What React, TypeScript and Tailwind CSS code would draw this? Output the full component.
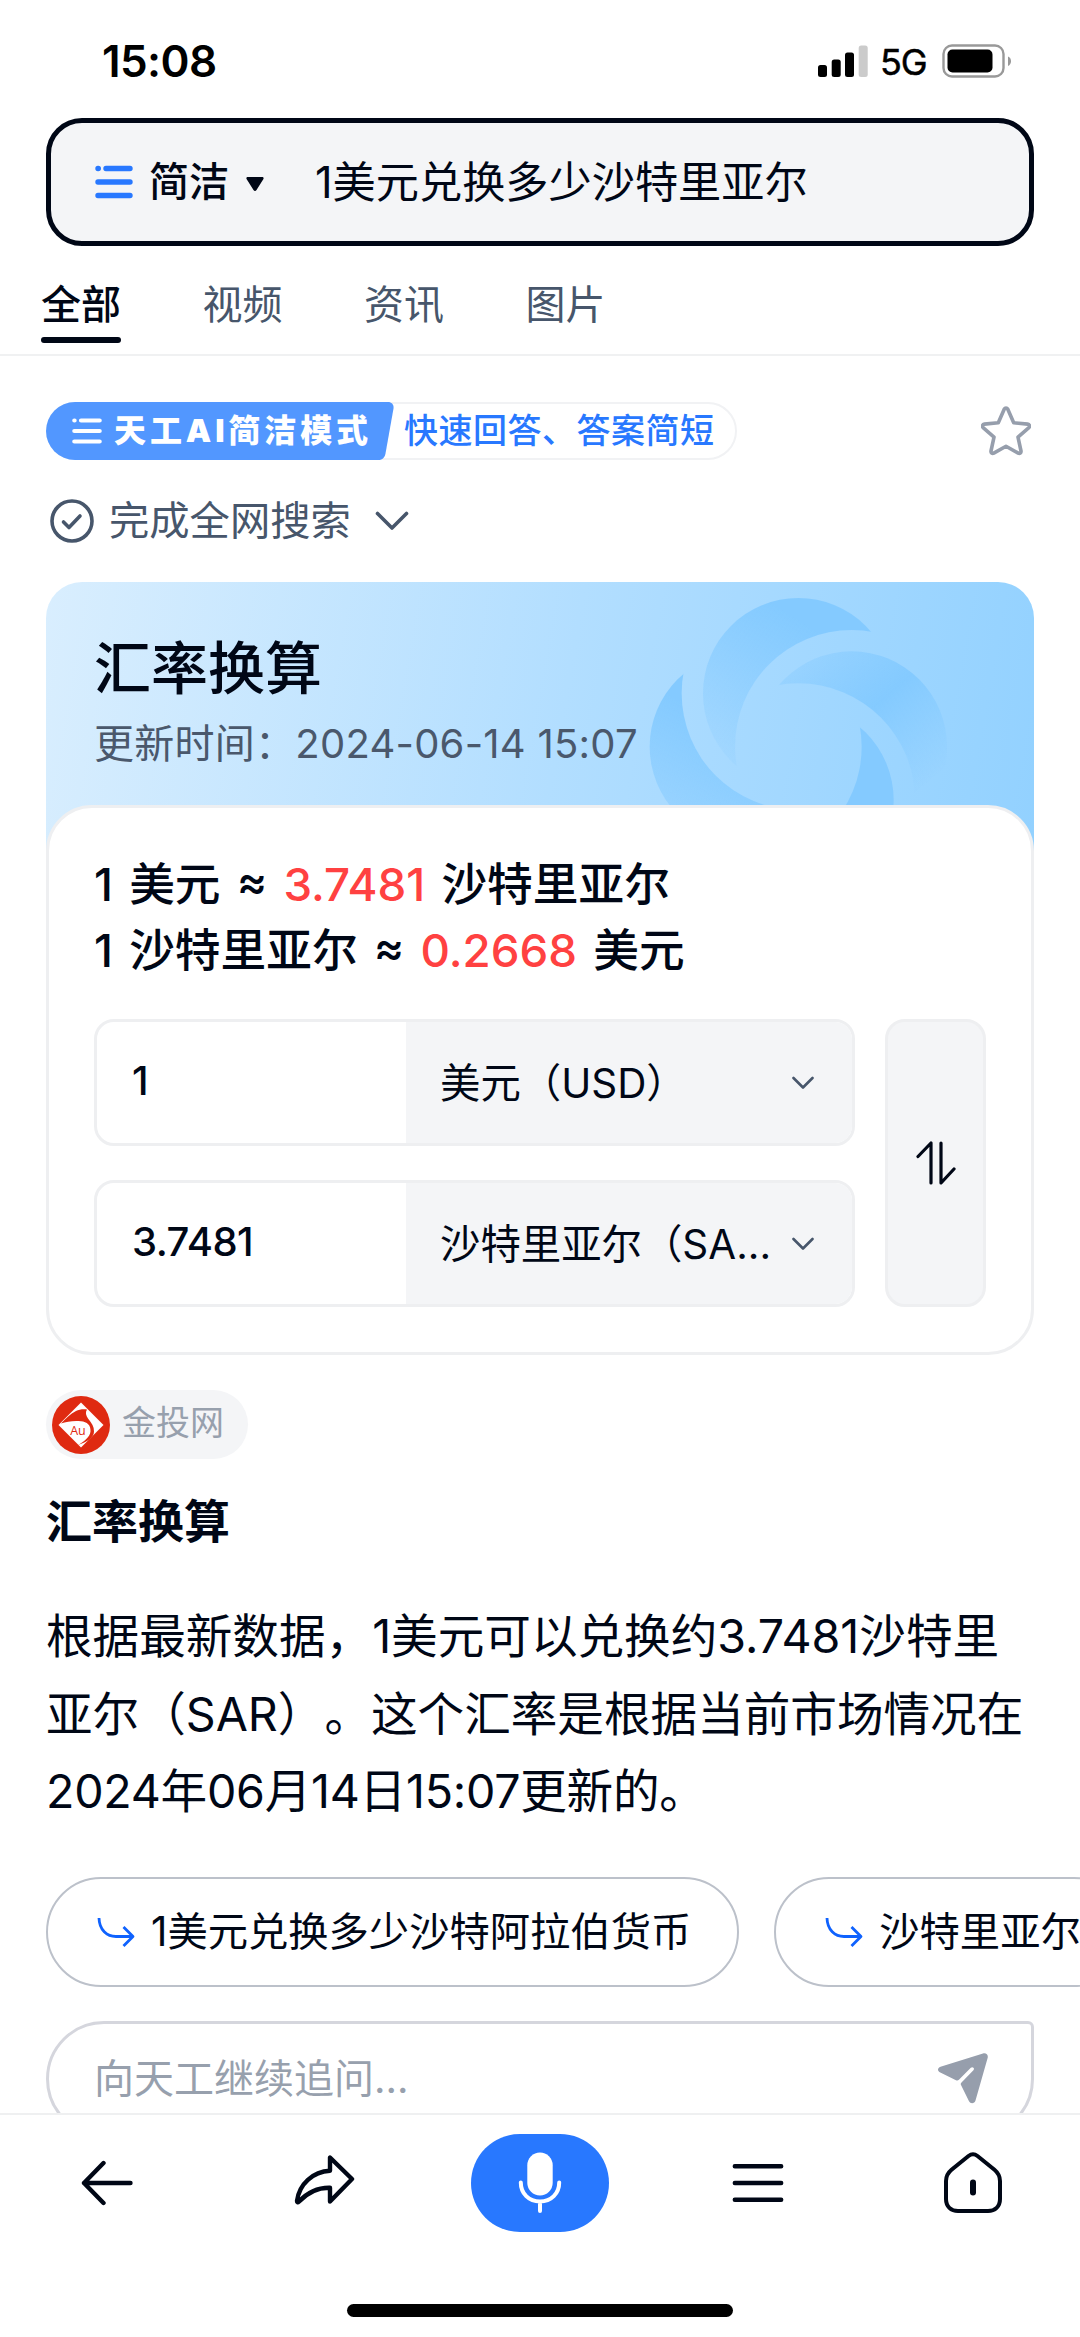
import React, { useState } from 'react';

const tabs = ['全部', '视频', '资讯', '图片'];
const suggestions = ['1美元兑换多少沙特阿拉伯货币', '沙特里亚尔'];

const StatusBar: React.FC = () => (
  <div className="flex h-[118px] items-start justify-between pl-[102px] pr-[68px]">
    <span className="mt-[39px] text-[44px] font-semibold leading-[44px] tracking-[-0.6px] text-black">15:08</span>
    <div className="mt-[43px] flex h-9 items-center">
      <svg width="50" height="34" viewBox="0 0 50 34">
        <rect x="0" y="21" width="9" height="12" rx="2.5" />
        <rect x="13.7" y="15.5" width="9" height="17.5" rx="2.5" />
        <rect x="27" y="8.5" width="9" height="24.5" rx="2.5" />
        <rect x="40.7" y="1.5" width="9" height="31.5" rx="2.5" fill="#cbcbcb" />
      </svg>
      <span className="ml-3 mt-0.5 w-[50px] text-[36px] leading-9 tracking-[-1.2px] text-black [-webkit-text-stroke:0.5px_black]">5G</span>
      <svg className="ml-[12px]" width="70" height="34" viewBox="0 0 70 34">
        <rect x="1.5" y="1.5" width="60" height="31" rx="8.5" fill="none" stroke="#999" strokeWidth="2.4" />
        <rect x="5.5" y="5.5" width="45" height="23" rx="5" />
        <path d="M66 12.5c2 .8 3 2.6 3 4.7s-1 3.900-3 4.700z" fill="#999" />
      </svg>
    </div>
  </div>
);

const SearchBox: React.FC = () => (
  <div className="mx-[46px] flex h-32 items-center rounded-[36px] border-[5px] border-[#000716] bg-[#f4f5f7] pl-[44px] text-[#000716]">
    <svg width="38" height="34" viewBox="0 0 38 34" stroke="#2878ff" strokeWidth="5.4" strokeLinecap="round">
      <path d="M3 3.500h.3M11 3.500h24M3 17h32M3 30.500h32" />
    </svg>
    <span className="ml-[16px] text-[40px] font-medium leading-[40px]">简洁</span>
    <svg className="ml-[17px] mt-1" width="18" height="16" viewBox="0 0 18 16">
      <path d="M2 1h14c1.500 0 2 1 1.300 2.200L10.500 14c-.8 1.300-2.200 1.300-3 0L.7 3.200C0 2 .5 1 2 1z" fill="#000716" />
    </svg>
    <span className="ml-[51px] text-[43.2px] leading-[44px]">1美元兑换多少沙特里亚尔</span>
  </div>
);

const ModeBadge: React.FC = () => (
  <div className="flex items-center justify-between pr-[3px]">
    <div className="relative flex h-[58px] w-[691px] items-center rounded-full border-2 border-[#f1f2f4]">
      <svg className="absolute -left-0.5 -top-0.5" width="348" height="58" viewBox="0 0 348 58">
        <path d="M29 0h313c4 0 6 3 5.500 6.500l-8 45c-.8 4-3 6.500-7 6.500H29a29 29 0 0 1 0-58z" fill="#5297ff" />
      </svg>
      <div className="relative flex items-center text-white">
        <svg className="ml-6" width="30" height="26" viewBox="0 0 30 26" stroke="white" strokeWidth="4.2" strokeLinecap="round">
          <path d="M2.300 2.500h.3M9 2.500h18.700M2.300 13h25.400M2.300 23.500h25.400" />
        </svg>
        <span className="ml-[12px] w-[258px] whitespace-nowrap text-[32px] font-black leading-8 tracking-[3.9px]">天工AI简洁模式</span>
      </div>
      <span className="ml-[32px] whitespace-nowrap text-[34px] font-medium leading-[34px] tracking-[0.5px] text-[#2878ff]">快速回答、答案简短</span>
    </div>
    <svg width="50" height="50" viewBox="0 0 50 50" fill="none" stroke="#969eac" strokeWidth="3.6" strokeLinejoin="round">
      <path d="M23.200 3.200c.8-1.400 2.800-1.400 3.600 0l5.900 13.600 14 1.300c1.800.2 2.400 2.200 1.200 3.500L37 31.100l3 13.900c.3 1.800-1.200 2.900-2.800 2.100L25 40.300l-12.200 6.800c-1.600.8-3.100-.3-2.800-2.100l3-13.900L2.100 21.600c-1.200-1.300-.6-3.300 1.200-3.500l14-1.300z" />
    </svg>
  </div>
);

// Four overlapping crescents, each one cut by the circle of the next
const Swirl: React.FC = () => (
  <svg className="absolute left-[594px] top-0" width="394" height="230" viewBox="0 6 1182 690">
    <defs>
      <linearGradient id="g1" gradientUnits="userSpaceOnUse" x1="540" y1="100" x2="260" y2="540">
        <stop offset="0.1" stopColor="#84caff" />
        <stop offset="1" stopColor="#84caff" stopOpacity="0.15" />
      </linearGradient>
      <linearGradient id="g2" gradientUnits="userSpaceOnUse" x1="460" y1="260" x2="820" y2="680">
        <stop offset="0" stopColor="#84caff" stopOpacity="0.35" />
        <stop offset="0.45" stopColor="#84caff" />
        <stop offset="0.95" stopColor="#84caff" stopOpacity="0" />
      </linearGradient>
      <linearGradient id="g4" gradientUnits="userSpaceOnUse" x1="190" y1="400" x2="50" y2="660">
        <stop offset="0" stopColor="#84caff" />
        <stop offset="1" stopColor="#84caff" stopOpacity="0.5" />
      </linearGradient>
      <mask id="m1" maskUnits="userSpaceOnUse" x="0" y="0" width="1182" height="960">
        <rect width="1182" height="960" fill="white" />
        <circle cx="635" cy="500" r="350" />
      </mask>
      <mask id="m2" maskUnits="userSpaceOnUse" x="0" y="0" width="1182" height="960">
        <rect width="1182" height="960" fill="white" />
        <circle cx="475" cy="660" r="350" />
      </mask>
      <mask id="m3" maskUnits="userSpaceOnUse" x="0" y="0" width="1182" height="960">
        <rect width="1182" height="960" fill="white" />
        <circle cx="315" cy="500" r="350" />
      </mask>
      <mask id="m4" maskUnits="userSpaceOnUse" x="0" y="0" width="1182" height="960">
        <rect width="1182" height="960" fill="white" />
        <circle cx="475" cy="340" r="350" />
      </mask>
    </defs>
    <circle cx="475" cy="340" r="286" fill="url(#g1)" mask="url(#m1)" />
    <circle cx="635" cy="500" r="286" fill="url(#g2)" mask="url(#m2)" />
    <circle cx="475" cy="660" r="286" fill="#84caff" mask="url(#m3)" />
    <circle cx="315" cy="500" r="286" fill="url(#g4)" mask="url(#m4)" />
  </svg>
);

const CurrencyRow: React.FC<{ amount: string; currency: string }> = ({ amount, currency }) => (
  <div className="flex h-[127px] w-[761px] overflow-hidden rounded-[20px] border-[3px] border-[#eeeff1]">
    <div className="flex w-[309px] items-center pb-1 pl-[35px] text-[40px] font-medium tracking-[-0.5px]">{amount}</div>
    <div className="flex flex-1 items-center justify-between bg-[#f4f5f7] pl-[34px] pr-[38px]">
      <span className="mt-0.5 whitespace-nowrap text-[40.4px] leading-[40px]">{currency}</span>
      <svg className="shrink-0" width="22" height="14" viewBox="0 0 22 14" fill="none" stroke="#47566b" strokeWidth="2.6" strokeLinecap="round" strokeLinejoin="round">
        <path d="M1.500 2l9.500 9.500L20.500 2" />
      </svg>
    </div>
  </div>
);

const RateCard: React.FC = () => {
  const [swapped, setSwapped] = useState(false);
  const rows = [
    { amount: '1', currency: '美元（USD）' },
    { amount: '3.7481', currency: '沙特里亚尔（SA...' },
  ];
  const ordered = swapped ? [...rows].reverse() : rows;

  return (
    <section>
      <div className="relative h-[280px] rounded-t-[36px] bg-linear-[100deg,#d9eefe_0%,#b2deff_52%,#92d1ff_100%] px-12 pt-[56px]">
        <Swirl />
        <h2 className="relative text-[57px] font-medium leading-[62px]">汇率换算</h2>
        <p className="relative mt-[23px] whitespace-pre text-[40px] leading-[42px] tracking-[0.25px] text-[#4a586c]">更新时间：2024-06-14 15:07</p>
      </div>
      <div className="relative -mt-[57px] h-[550px] rounded-[46px] border-[3px] border-[#eeeff1] bg-white px-[45px] pt-[44px]">
        <div className="text-[45.7px] font-medium leading-[66px] [word-spacing:4px]">
          <p>1 美元 ≈ <span className="text-[#ff4141]">3.7481</span> 沙特里亚尔</p>
          <p>1 沙特里亚尔 ≈ <span className="text-[#ff4141]">0.2668</span> 美元</p>
        </div>
        <div className="mt-[35px] flex justify-between">
          <div className="flex flex-col gap-[34px]">
            {ordered.map((row) => (
              <CurrencyRow key={row.currency} {...row} />
            ))}
          </div>
          <button
            onClick={() => setSwapped(!swapped)}
            className="flex w-[101px] items-center justify-center rounded-[20px] border-[3px] border-[#eeeff1] bg-[#f4f5f7]"
          >
            <svg width="40" height="44" viewBox="0 0 40 44" fill="none" stroke="#000716" strokeWidth="3.2" strokeLinecap="round" strokeLinejoin="round">
              <path d="M2 15.500L15 2v40M25 2v40l13-14" />
            </svg>
          </button>
        </div>
      </div>
    </section>
  );
};

const SourcePill: React.FC = () => (
  <div className="flex h-[69px] w-[202px] items-center rounded-full bg-[#f4f5f7] pl-[6px]">
    <svg width="58" height="58" viewBox="0 0 58 58">
      <circle cx="29" cy="29" r="29" fill="#df2a11" />
      <path d="M29 6.500l22.500 22.500L29 51.500 6.500 29z" fill="white" />
      <path d="M9 27.500c5-5 9-9.500 15-12.500 3-1.500 7-2 11-1.500-2 3-1 6 1 9 4 5 6 8 6 13 0 6-7 10.500-16 13.500 6-3.500 12-8 12.500-13.500C39 29 35 26 29 25.300 22 24.500 15 25.500 9 27.500z" fill="#df2a11" />
      <text x="26" y="38.5" fontSize="12.5" fill="#df2a11" textAnchor="middle" fontFamily="Open Sans">Au</text>
    </svg>
    <span className="mb-1 ml-[12px] text-[34px] leading-[34px] text-[#97a0ad]">金投网</span>
  </div>
);

const BottomNav: React.FC = () => (
  <nav className="h-[224px] border-t-2 border-[#eff0f1] bg-white">
    <div className="flex h-[136px] items-center pl-[81px] text-[#000716]">
      <svg width="53" height="46" viewBox="0 0 53 46" fill="none" stroke="currentColor" strokeWidth="4.4" strokeLinecap="round" strokeLinejoin="round">
        <path d="M22.500 3L3 23l19.500 20M3 23h46.500" />
      </svg>
      <svg className="-mt-[7px] ml-[159px]" width="62" height="52" viewBox="0 0 62 52" fill="none" stroke="currentColor" strokeWidth="4.4" strokeLinecap="round" strokeLinejoin="round">
        <path d="M37 3.500v13.200C20 17.500 6 30 4 47c0 1.500.8 1.800 1.800.8C14 39 25 33.500 37 33.800v13.700l22-22.500z" />
      </svg>
      <button className="ml-[116px] flex h-[98px] w-[138px] items-center justify-center rounded-full bg-[#2878ff]">
        <svg width="44" height="62" viewBox="0 0 44 62" fill="none" stroke="white" strokeWidth="4" strokeLinecap="round">
          <rect x="9.3" y="0.5" width="25.4" height="43" rx="12.7" fill="white" stroke="none" />
          <path d="M2.800 30.500c0 11 8 19 19.200 19s19.200-8 19.200-19M22 50v9" />
        </svg>
      </button>
      <svg className="ml-[123px]" width="52" height="38" viewBox="0 0 52 38" stroke="currentColor" strokeWidth="4.4" strokeLinecap="round">
        <path d="M2.800 2.300h46.400M2.800 19h46.400M2.800 35.700h46.400" />
      </svg>
      <svg className="ml-[160px]" width="58" height="62" viewBox="0 0 58 62" fill="none" stroke="currentColor" strokeWidth="4" strokeLinejoin="round" strokeLinecap="round">
        <path d="M24.500 4c2.800-2.200 6.200-2.200 9 0l17 13.700c3.800 3.200 5.500 6.500 5.500 11.300v18c0 7.500-5 12-12 12H14C7 59 2 54.500 2 47V29c0-4.800 1.700-8.100 5.500-11.300z" />
        <path d="M29 30.500v10" strokeWidth="6" />
      </svg>
    </div>
    <div className="mx-auto mt-[53px] h-[13px] w-[386px] rounded-full bg-black" />
  </nav>
);

const App: React.FC = () => {
  const [activeTab, setActiveTab] = useState('全部');

  return (
    <div className="flex h-[2337px] w-[1080px] flex-col overflow-hidden bg-white text-[#000716] [font-family:Inter,'Noto_Sans_CJK_SC',sans-serif] [text-spacing-trim:space-all]">
      <StatusBar />
      <SearchBox />

      <div className="flex h-[110px] gap-[81.5px] border-b-2 border-[#f0f1f2] pl-[41px] pt-[39px]">
        {tabs.map((tab) => (
          <button
            key={tab}
            onClick={() => setActiveTab(tab)}
            className={`flex h-[60px] w-20 flex-col whitespace-nowrap text-[40px] leading-[40px] ${
              tab === activeTab ? 'font-medium' : 'text-[#47566b]'
            }`}
          >
            {tab}
            {tab === activeTab && <span className="mt-[12px] h-[6px] w-20 shrink-0 rounded-full bg-[#000716]" />}
          </button>
        ))}
      </div>

      <main className="min-h-0 flex-1 overflow-hidden px-[46px] pt-[46px]">
        <ModeBadge />

        <div className="mt-[39px] flex h-[44px] items-center pl-1 text-[#47566b]">
          <svg width="44" height="44" viewBox="0 0 44 44" fill="none" stroke="currentColor" strokeWidth="3.6" strokeLinecap="round" strokeLinejoin="round">
            <circle cx="22" cy="22" r="20" />
            <path d="M13.500 23l5.500 5.500L30 17" />
          </svg>
          <span className="ml-[15px] text-[40.3px] leading-[44px]">完成全网搜索</span>
          <svg className="ml-[24px]" width="34" height="20" viewBox="0 0 34 20" fill="none" stroke="currentColor" strokeWidth="3.6" strokeLinecap="round" strokeLinejoin="round">
            <path d="M2.500 2.500L17 17 31.500 2.500" />
          </svg>
        </div>

        <div className="mt-[39px]">
          <RateCard />
        </div>

        <div className="mt-[35px]">
          <SourcePill />
        </div>
        <h3 className="mt-[36px] text-[46px] font-semibold leading-[52px]">汇率换算</h3>
        <div className="mt-[51px] whitespace-nowrap text-[46.6px] leading-[77.5px]">
          <p>根据最新数据，1美元可以兑换约3.7481沙特里</p>
          <p>亚尔（SAR）。这个汇率是根据当前市场情况在</p>
          <p className="tracking-[-0.25px]">2024年06月14日15:07更新的。</p>
        </div>

        <div className="mt-[46px] flex gap-[35px]">
          {suggestions.map((item) => (
            <button key={item} className="flex h-[110px] shrink-0 items-center rounded-full border-2 border-[#bcc1ca] pl-[49px] pr-[46px]">
              <svg width="38" height="30" viewBox="0 0 38 30" fill="none" stroke="#0f62fe" strokeWidth="2.8" strokeLinejoin="round">
                <path d="M2 1c.3 12 8 18.500 17 18.500h17M26.500 10l9.500 9.500L26.500 29" />
              </svg>
              <span className="ml-[16px] whitespace-nowrap text-[40.3px] leading-[40px]">{item}</span>
            </button>
          ))}
        </div>

        <div className="mt-[34px] flex h-[116px] items-center justify-between rounded-[58px] rounded-tr-[6px] border-[3px] border-[#d5d6dd] pl-[45px] pr-[43px]">
          <span className="text-[40px] leading-[40px] text-[#97a0ad]">向天工继续追问...</span>
          <svg width="50" height="51" viewBox="0 0 50 51" fill="#969eac">
            <path d="M2.500 13.700L45 .4c3.200-.8 5.300 1.300 4.700 4.300L37.500 47.500c-.9 3.200-5 3.700-6.500.800l-8-16.300c-.5-1-.3-1.800.5-2.600L35.400 17.300c1.600-2-.6-4.200-2.600-2.600L20.900 26.800c-.9.900-1.800 1-2.900.500L1.800 19.200C-.9 17.800-.5 14.700 2.500 13.700z" />
          </svg>
        </div>
      </main>

      <BottomNav />
    </div>
  );
};

export default App;
